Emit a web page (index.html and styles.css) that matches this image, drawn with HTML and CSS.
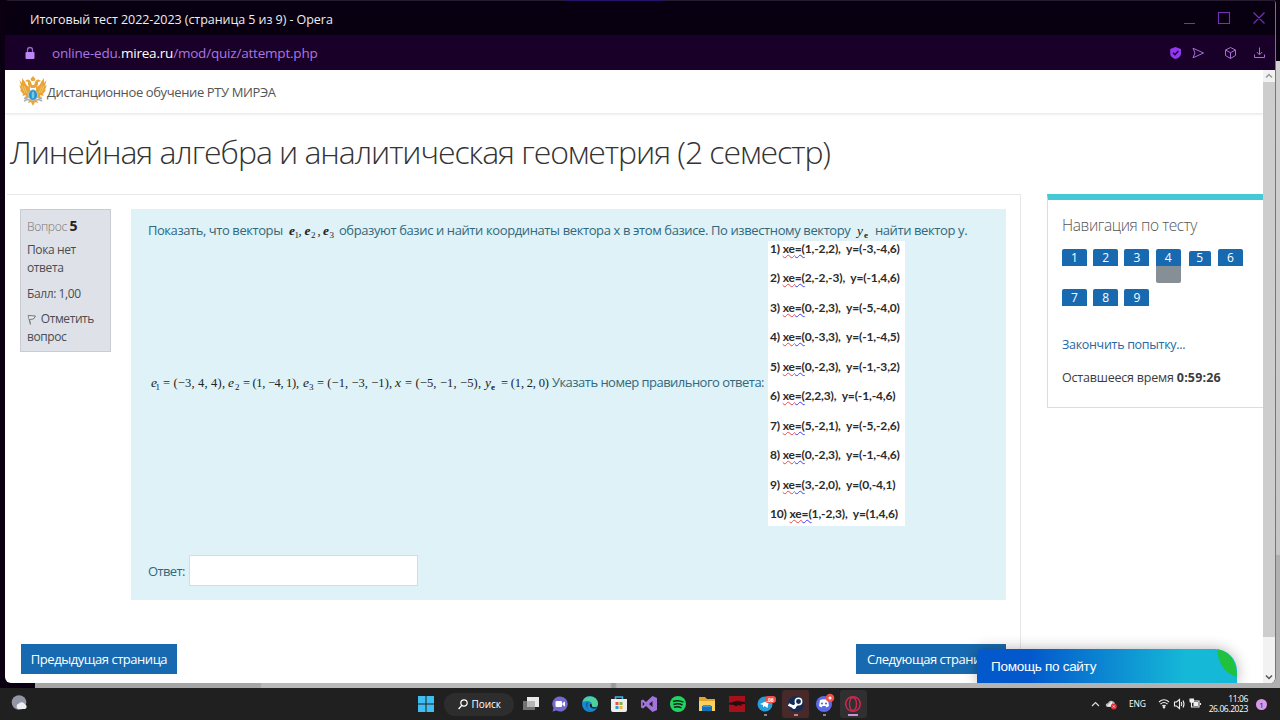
FILE: index.html
```
<!DOCTYPE html>
<html lang="ru">
<head>
<meta charset="utf-8">
<title>Итоговый тест 2022-2023</title>
<link rel="stylesheet" href="styles.css">
</head>
<body>
<div class="desktop">
<div class="window">
  <header class="titlebar">
    <span class="wintitle">Итоговый тест 2022-2023 (страница 5 из 9) - Opera</span>
    <svg class="winctl" width="90" height="20" viewBox="0 0 90 20" fill="none" stroke="#7433b8" stroke-width="1.1"><path d="M5 13.500H16M39.500 2.500H50.500V13.500H39.500ZM74.500 2.500L85.500 13.500M85.500 2.500L74.500 13.500"/></svg>
  </header>
  <div class="urlbar">
    <svg width="12" height="14" viewBox="0 0 12 14"><path d="M3.500 6V4a2.500 2.500 0 0 1 5 0v2" fill="none" stroke="#9a63cf" stroke-width="1.300"/><rect x="1.500" y="6" width="9" height="7" rx="1" fill="#bd86f5"/></svg>
    <span class="url">online-edu.<b>mirea.ru</b>/mod/quiz/attempt.php</span>
    <svg class="urlicons" width="100" height="16" viewBox="0 0 100 16" fill="none" stroke="#a86fd6" stroke-width="1"><path d="M5.500 2L11 4V9Q10.500 12.500 5.500 14Q.7 12.500 .2 9V4Z" fill="#9238f0" stroke="none"/><path d="M3 7.800L5 9.800L8.300 6" stroke="#190028" stroke-width="1.400"/><path d="M23 3.200L33.500 8L23 12.800L25 8Z"/><path d="M60.500 2.500L65.500 5V10.500L60.500 13.500L55.500 10.500V5ZM55.500 5L60.500 7.700L65.500 5M60.500 7.700V13.500"/><path d="M89.500 2.500V9.500M86.800 7L89.500 9.800L92.200 7M84.500 9.500V12.500H94.500V9.500"/></svg>
  </div>
  <div class="view">
    <main class="page">
      <div class="brand">
        <svg width="28" height="32" viewBox="0 0 28 32"><g fill="#e8a63a"><path d="M14 0L16.500 3L15.500 5H12.500L11.500 3Z"/><path d="M12.500 12Q8 10 9 6L6 5Q9 2 11.500 5L13 9H15L16.500 5Q19 2 22 5L19 6Q20 10 15.500 12Z"/><path d="M11 11Q7 10 6 6L3 2L3 7L.5 4L2 10L.3 9L2 14L1 14L4 18L3.500 20L7 19L6 22L11 22ZM17 11Q21 10 22 6L25 2L25 7L27.500 4L26 10L27.700 9L26 14L27 14L24 18L24.500 20L21 19L22 22L17 22Z"/><path d="M11 22L9 27L12 26L14 30L16 26L19 27L17 22Z"/></g><path d="M5 22L10 24M18 24L23 22M5 25L9 23M19 23L23 25" stroke="#a9adb5" stroke-width="1.600"/><path d="M5 10L8 17M23 10L20 17M3 10L6 17M25 10L22 17" stroke="#f7cf7b" stroke-width=".7"/><ellipse cx="14" cy="19" rx="4.500" ry="5.300" fill="#2493cb" stroke="#b7c9cf"/><path d="M13 16H15V22H13ZM12 19H16" fill="#75c9e7" stroke="#75c9e7" stroke-width=".4"/></svg>
        <span>Дистанционное обучение РТУ МИРЭА</span>
      </div>
      <h1 class="course">Линейная алгебра и аналитическая геометрия (2 семестр)</h1>
      <div class="columns">
        <section class="region">
          <div class="question">
            <aside class="info">
              <p class="no"><span>Вопрос</span> <b>5</b></p>
              <p>Пока нет<br>ответа</p>
              <p class="grade">Балл: 1,00</p>
              <p class="flag"><svg width="11" height="11" viewBox="0 0 11 11"><path d="M1.200 1L3.500 10.500" stroke="#777" stroke-width="1.200"/><path d="M1.500 1.500L8.500 2L6.500 5L2.500 5.500" fill="#e8e9ec" stroke="#777"/></svg> Отметить<br>вопрос</p>
            </aside>
            <div class="formulation">
              <div class="prompt">
                <span class="s1">Показать, что векторы</span>
                <svg class="vec" width="50" height="20" viewBox="0 0 50 20"><g class="math bold"><text x="3" y="15">e</text><text x="18.500" y="15">e</text><text x="37" y="15">e</text></g><g class="math sub"><text x="8.500" y="17.500">1</text><text x="25" y="17.500">2</text><text x="43.500" y="17.500">3</text></g><g class="math roman"><text x="12.500" y="15">,</text><text x="31.500" y="15">,</text></g></svg>
                <span class="s2">образуют базис и найти координаты вектора x в этом базисе. По известному вектору</span>
                <svg width="21" height="20" viewBox="0 0 21 20"><text class="math" x="4" y="15">y</text><text class="math sub bold" x="11" y="17.500">e</text></svg>
                <span class="s3">найти вектор y.</span>
              </div>
              <div class="given">
                <svg width="404" height="24" viewBox="0 0 404 24">
                  <g class="math"><text x="3" y="15">e</text><text x="80" y="15">e</text><text x="155" y="15">e</text><text x="247" y="15">x</text><text x="337" y="15">y</text></g>
                  <g class="math sub"><text x="7.500" y="18">1</text><text x="87" y="18">2</text><text x="161" y="18">3</text><text x="343" y="18" class="bold">e</text></g>
                  <g class="math roman"><text x="15" y="15" textLength="62">= (−3, 4, 4),</text><text x="95" y="15" textLength="56">= (1, −4, 1),</text><text x="169" y="15" textLength="75">= (−1, −3, −1),</text><text x="257" y="15" textLength="76">= (−5, −1, −5),</text><text x="353" y="15" textLength="48">= (1, 2, 0)</text></g>
                </svg>
                <span class="s4">Указать номер правильного ответа:</span>
                <ol class="options">
                  <li>1) <u>xe</u><i>=(</i>1,-2,2),&nbsp; y=(-3,-4,6)</li>
                  <li>2) <u>xe</u><i>=(</i>2,-2,-3),&nbsp; y=(-1,4,6)</li>
                  <li>3) <u>xe</u><i>=(</i>0,-2,3),&nbsp; y=(-5,-4,0)</li>
                  <li>4) <u>xe</u><i>=(</i>0,-3,3),&nbsp; y=(-1,-4,5)</li>
                  <li>5) <u>xe</u><i>=(</i>0,-2,3),&nbsp; y=(-1,-3,2)</li>
                  <li>6) <u>xe</u><i>=(</i>2,2,3),&nbsp; y=(-1,-4,6)</li>
                  <li>7) <u>xe</u><i>=(</i>5,-2,1),&nbsp; y=(-5,-2,6)</li>
                  <li>8) <u>xe</u><i>=(</i>0,-2,3),&nbsp; y=(-1,-4,6)</li>
                  <li>9) <u>xe</u><i>=(</i>3,-2,0),&nbsp; y=(0,-4,1)</li>
                  <li>10) <u>xe</u><i>=(</i>1,-2,3),&nbsp; y=(1,4,6)</li>
                </ol>
              </div>
              <label class="answer"><span>Ответ:</span><input type="text"></label>
            </div>
          </div>
          <div class="pager"><button>Предыдущая страница</button><button class="next">Следующая страница</button></div>
        </section>
        <aside class="nav">
          <h2>Навигация по тесту</h2>
          <div class="cells"><a>1</a><a>2</a><a>3</a><a class="done">4</a><a class="here">5</a><a>6</a><a>7</a><a>8</a><a>9</a></div>
          <a class="finish">Закончить попытку...</a>
          <p class="timer">Оставшееся время <b>0:59:26</b></p>
        </aside>
      </div>
    </main>
    <div class="scroll">
      <svg width="12" height="12" viewBox="0 0 12 12"><path d="M3 7.500L6 4.500L9 7.500" fill="none" stroke="#999" stroke-width="1.500"/></svg>
      <div class="thumb"></div>
      <svg class="down" width="12" height="12" viewBox="0 0 12 12"><path d="M3 4.500L6 7.500L9 4.500" fill="none" stroke="#555" stroke-width="1.500"/></svg>
    </div>
    <div class="help"><span>Помощь по сайту</span><svg width="20" height="29" viewBox="0 0 20 29"><path d="M0 0Q19 3 20 28Q2 23 0 0Z" fill="#1fc13d"/></svg></div>
  </div>
</div>
</div>
<footer class="taskbar">
  <svg class="weather" width="20" height="20" viewBox="0 0 20 20"><circle cx="9" cy="8.500" r="7.300" fill="#9296a4"/><path d="M8 15a3 3 0 0 1 1-5.500a3.500 3.500 0 0 1 6 .8a2.500 2.500 0 0 1 0 4.700Z" fill="#eceef2"/></svg>
  <div class="apps">
    <span class="app"><svg width="18" height="18" viewBox="0 0 18 18" fill="#3fbef2"><path d="M1 1H8.500V8.500H1ZM9.500 1H17V8.500H9.500ZM1 9.500H8.500V17H1ZM9.500 9.500H17V17H9.500Z"/></svg></span>
    <span class="search"><svg width="10" height="11" viewBox="0 0 10 11" fill="none" stroke="#fff" stroke-width="1.200"><circle cx="6" cy="4" r="3.200"/><path d="M3.700 6.500L.6 10"/></svg>Поиск</span>
    <span class="app"><svg width="18" height="18" viewBox="0 0 18 18"><path d="M1 6H13V15H1Z" fill="#737373"/><path d="M5 2H17V12H5Z" fill="#e9e9e9"/><path d="M5 6H13V12H5Z" fill="#b5b5b5"/></svg></span>
    <span class="app"><svg width="18" height="18" viewBox="0 0 18 18"><path d="M9 1.500a7.500 7.500 0 1 1-3.500 14L1.500 16.500L2.500 13A7.500 7.500 0 0 1 9 1.500Z" fill="#7469cc"/><rect x="4.500" y="6" width="6.500" height="6" rx="1" fill="#fff"/><path d="M11.500 8L14 6.500V11.500L11.500 10Z" fill="#fff"/></svg></span>
    <span class="app"><svg width="18" height="18" viewBox="0 0 18 18"><circle cx="9" cy="9" r="8" fill="#1689cf"/><path d="M1.500 7A8 8 0 0 1 17 8.500Q17 12 13 12Q10 12 11 10Q11 6.500 7 6Q3.500 6 1.500 7Z" fill="#4ed29a"/><path d="M7.500 7.500Q4 13 10 16.800A8 8 0 0 1 5 7.800Z" fill="#135da6"/><path d="M9 9Q8 12.500 12 13.500Q15 13.800 16 12.800Q15 12 13 12Q10 12 11 10Q10.500 8.500 9 9Z" fill="#202020"/></svg></span>
    <span class="app"><svg width="18" height="18" viewBox="0 0 18 18"><path d="M5.500 5V2H12.500V5" fill="none" stroke="#41b5e5" stroke-width="1.500"/><path d="M1 4H17V15Q17 17 15 17H3Q1 17 1 15Z" fill="#eee"/><path d="M5.500 7H8.500V10H5.500Z" fill="#e95435"/><path d="M9.500 7H12.500V10H9.500Z" fill="#77b743"/><path d="M5.500 11H8.500V14H5.500Z" fill="#269fd8"/><path d="M9.500 11H12.500V14H9.500Z" fill="#f5b52e"/></svg></span>
    <span class="app"><svg width="18" height="18" viewBox="0 0 18 18"><path d="M12.500 1L17 3V15L12.500 17L6 11L3 13.500L1 12.500V5.500L3 4.500L6 7ZM12.500 6L9 9L12.500 12ZM2.700 7V11L4.700 9Z" fill="#a174dc" fill-rule="evenodd"/></svg></span>
    <span class="app"><svg width="18" height="18" viewBox="0 0 18 18"><circle cx="9" cy="9" r="8" fill="#20d660"/><path d="M4 6.500Q9.500 4.700 14.500 7.200M4.500 9.500Q9.500 8 13.500 10M5 12.200Q9 11 12.500 12.800" stroke="#161f19" stroke-width="1.500" fill="none"/></svg></span>
    <span class="app"><svg width="18" height="18" viewBox="0 0 18 18"><path d="M1 2H7L9 4H17V16H1Z" fill="#e3a32d"/><path d="M1 6H17V16H1Z" fill="#ffd15a"/><path d="M4 11H14V16H4Z" fill="#1670b8"/><path d="M5 10H13V12H5Z" fill="#3795dc"/></svg></span>
    <span class="app"><svg width="18" height="18" viewBox="0 0 18 18"><path d="M1 1H17V17H1Z" fill="#a90f1a"/><path d="M1 8L5 7L9 5.500L13 6.500L17 7V9L13 9.500L14 11L10 10L8 11.500L6 10L1 9.500Z" fill="#270d10"/></svg></span>
    <span class="app"><svg width="20" height="24" viewBox="0 0 20 24"><circle cx="9" cy="12" r="7.500" fill="#279ed8"/><path d="M4 12L13 8L11.500 16L8.500 14L7 15.500V13Z" fill="#fff"/><rect x="9" y="4" width="11" height="7" rx="3" fill="#ef5047"/><text class="badge" x="10.500" y="9.500">.06</text><path d="M8 23H11" stroke="#aaa" stroke-width="1.500"/></svg></span>
    <span class="app hot"><svg width="20" height="24" viewBox="0 0 20 24"><circle cx="10" cy="12" r="8" fill="#142c55"/><path d="M2.500 12.500L8 15L12 11" stroke="#fff" stroke-width="3" fill="none"/><circle cx="12.500" cy="9.500" r="3.200" fill="#142c55" stroke="#fff" stroke-width="1.500"/><circle cx="8" cy="15" r="2" fill="#fff"/><path d="M8 23H12" stroke="#f79aa5" stroke-width="1.500"/></svg></span>
    <span class="app"><svg width="20" height="24" viewBox="0 0 20 24"><circle cx="9" cy="12" r="8" fill="#5c6bea"/><path d="M5 8Q9 6.500 13 8L14 14L11.500 15.500L10.500 14H7.500L6.500 15.500L4 14Z" fill="#fff"/><circle cx="7" cy="11.500" r="1.100" fill="#5c6bea"/><circle cx="11" cy="11.500" r="1.100" fill="#5c6bea"/><circle cx="15" cy="6" r="4.300" fill="#ef5148"/><circle cx="15" cy="6" r="1.500" fill="#fff"/><path d="M8 23H11" stroke="#aaa" stroke-width="1.500"/></svg></span>
    <span class="app active"><svg width="20" height="24" viewBox="0 0 20 24"><g fill="none" stroke="#cf2850"><circle cx="10" cy="12" r="7.300" stroke-width="1.500"/><ellipse cx="10" cy="12" rx="3.500" ry="6.500" stroke-width="1.300"/></g><path d="M5 23H15" stroke="#d7a2e8" stroke-width="1.800"/></svg></span>
  </div>
  <div class="tray">
    <svg width="28" height="20" viewBox="0 0 28 20"><path d="M3 12L6.500 8.500L10 12" fill="none" stroke="#ddd" stroke-width="1.200"/><path d="M18 13Q15 10 19 9Q21 5 25 8Q27 10 25 13Z" fill="#b9b9b9"/><path d="M18 12L23 7V13Z" fill="#eee"/><circle cx="24.800" cy="12.500" r="3" fill="#dc323b"/><path d="M23.800 11.500L25.800 13.500M25.800 11.500L23.800 13.500" stroke="#fff" stroke-width=".7"/></svg>
    <span class="lang">ENG</span>
    <svg class="status" width="44" height="16" viewBox="0 0 44 16" fill="none" stroke="#eee" stroke-width="1.100"><path d="M1 6Q6 1.500 11 6M2.500 8Q6 5 9.500 8M4.300 10Q6 8.500 7.700 10"/><circle cx="6" cy="11.300" r=".7" fill="#eee"/><path d="M16.500 6H18.500L21.500 3.500V12.500L18.500 10H16.500ZM23.200 6Q24.500 8 23.200 10M25 4.500Q27 8 25 11.500"/><path d="M33.500 5H41V11H33.500ZM42.500 7V9"/><path d="M36 6.500H39.500V9.500H36ZM32 3H35.500V5.500Q34 7.500 32 5.500Z" fill="#eee"/></svg>
    <span class="clock">11:06<br>26.06.2023</span>
    <span class="count">1</span>
  </div>
</footer>
</body>
</html>
```

FILE: styles.css
```
* { box-sizing: border-box; }
body { margin: 0; width: 1280px; height: 720px; overflow: hidden; font: 13px/18px "Open Sans", "Noto Sans", sans-serif; color: #3a3d40; background: #202020; }
p, h1, h2, ol { margin: 0; padding: 0; }
svg { display: block; flex: none; }
.desktop { height: 688px; padding: 0 4px 5px 5px; background: linear-gradient(#0a0012, #0a0012) 0 0/35px 100% no-repeat, linear-gradient(#0a0012, #0a0012) 0 0/100% 61px no-repeat, linear-gradient(#d2d2d2, #c6c6c6) 100% 0/4px 555px no-repeat, linear-gradient(90deg, #a5a5a5 260px, #b9b9b9 262px, #b9b9b9 610px, #999 612px, #999 615px, #b9b9b9 617px, #b0b0b0); }
.window { height: 683px; border-right: 1px solid #777; border-radius: 4px 4px 6px 6px; overflow: hidden; display: flex; flex-direction: column; }
.titlebar { height: 35px; display: flex; align-items: center; justify-content: space-between; padding: 5px 6px 0 25px; flex: none; background: linear-gradient(#2a1168, #2a1168) 560px 0/98px 1px no-repeat, linear-gradient(#261b30, #261b30) 0 0/100% 1px no-repeat, #080010; }
.wintitle { color: #eee; font-size: 12.500px; letter-spacing: -.06px; white-space: nowrap; }
.urlbar { height: 35px; flex: none; background: #190028; display: flex; align-items: center; padding: 1px 5px 0 19px; color: #ac75e4; }
.url { margin-left: 16px; font-size: 13.5px; letter-spacing: -.2px; white-space: nowrap; }
.url b { font-weight: 400; color: #fff; }
.urlicons { margin-left: auto; }
.view { position: relative; height: 613px; display: flex; background: #fff; }
.page { width: 1258px; height: 613px; overflow: hidden; flex: none; }
.brand { height: 44px; display: flex; align-items: center; padding-left: 14px; border-bottom: 1px solid #ececec; box-shadow: 0 1px 2px #eee; color: #555; letter-spacing: -.38px; white-space: nowrap; }
.course { height: 80px; padding: 18px 0 0 5px; font-size: 32px; line-height: 40px; letter-spacing: -1.070px; font-weight: 300; white-space: nowrap; color: #333; }
.columns { display: flex; gap: 26px; }
.region { width: 1014px; margin-left: 2px; height: 500px; border: solid #e8e8e8; border-width: 1px 1px 0 0; padding: 14px 14px 0 13px; }
.question { display: flex; gap: 20px; height: 391px; }
.info { width: 91px; height: 143px; background: #dee2e8; border: 1px solid #c9cdd3; padding: 7px 0 0 6px; font-size: 12px; letter-spacing: -.4px; color: #494c50; white-space: nowrap; }
.no { margin-bottom: 5px; line-height: 18px; }
.no span { color: #777; font-weight: 300; letter-spacing: -.3px; }
.no b { font-size: 14px; color: #222; }
.grade { margin: 8px 0 7px; }
.flag svg { display: inline-block; vertical-align: -2px; }
.formulation { width: 876px; background: #def2f8; color: #32687c; padding: 11px 0 0 17px; letter-spacing: -.39px; }
.prompt { display: flex; height: 20px; align-items: center; white-space: nowrap; }
.vec { margin-right: 3px; }
.s1 { width: 138px; letter-spacing: -.43px; }
.s2 { width: 514px; }
.s3 { margin-left: 1px; }
.given { display: flex; height: 286px; align-items: center; }
.given svg { margin-top: 2px; }
.s4 { width: 216px; padding-bottom: 2px; letter-spacing: -.52px; white-space: nowrap; }
.math { font: italic 13.5px "Liberation Serif", serif; fill: #222; letter-spacing: 0; }
.roman, .roman text { font-style: normal; font-size: 12.5px; }
.sub, .sub text { font-style: normal; font-size: 9px; }
.bold { font-weight: 700; }
.options { list-style: none; width: 137px; height: 285px; background: #fff; color: #2b2b2b; font: 700 12px/16px Lato, sans-serif; letter-spacing: -.14px; padding: 0 0 0 2px; white-space: nowrap; }
.options li { height: 29.500px; }
.options u, .options i { font-style: normal; text-decoration: underline wavy #ed4747 .7px; text-underline-offset: 1px; text-decoration-skip-ink: none; }
.options i { text-decoration-color: #3c3cf0; }
.answer { display: flex; align-items: center; padding-top: 29px; }
.answer span { width: 41px; letter-spacing: -.6px; white-space: nowrap; }
.answer input { width: 229px; height: 31px; border: 1px solid #d3dde1; background: #fff; padding: 0; }
.pager { display: flex; justify-content: space-between; padding: 44px 0 0 1px; }
.pager button { font: 13px "Open Sans", sans-serif; letter-spacing: -.46px; width: 156px; height: 30px; border: 0; padding: 0; background: #186ab0; color: #fff; white-space: nowrap; }
.pager .next { width: 150px; overflow: hidden; text-align: left; padding-left: 11px; }
.nav { width: 217px; height: 214px; border: solid #ddd; border-width: 0 0 1px 1px; border-top: 6px solid #45c9d6; padding: 15px 0 0 14px; }
.nav h2 { font-size: 15.500px; line-height: 21px; letter-spacing: -.4px; font-weight: 300; color: #555; white-space: nowrap; }
.cells { display: grid; grid-template-columns: repeat(6, 25px); column-gap: 6.200px; grid-auto-rows: 40px; margin-top: 13px; }
.cells a { height: 17px; background: #186ab0; color: #fff; border-radius: 2px 2px 0 0; text-align: center; font-size: 12px; line-height: 17px; }
.cells .done { height: 34px; border-radius: 2px; background: linear-gradient(#186ab0 17px, #868e96 17px); }
.cells .here { height: 15px; line-height: 14px; margin: 2px 1px 0 2px; }
.finish { display: block; margin-top: 7px; color: #2469a5; font-size: 12.500px; letter-spacing: -.3px; white-space: nowrap; }
.timer { margin-top: 15px; font-size: 12.500px; letter-spacing: -.2px; white-space: nowrap; }
.timer b { letter-spacing: .15px; }
.scroll { width: 12px; background: #f2f2f2; display: flex; flex-direction: column; flex: none; }
.thumb { height: 555px; background: #cdcdcd; }
.down { margin-top: auto; }
.help { position: absolute; left: 972px; top: 579px; width: 260px; height: 34px; display: flex; justify-content: space-between; padding-left: 14px; border-radius: 5px 22px 0 0; overflow: hidden; background: linear-gradient(90deg, #0358cc 20%, #15b8d7 80%); color: #fff; font: 13.500px/35px "Liberation Sans", sans-serif; letter-spacing: -.28px; box-shadow: 0 0 14px rgba(0,0,0,.3); white-space: nowrap; }
.taskbar { height: 32px; background: #202020; display: flex; align-items: center; color: #fff; }
.weather { margin-left: 10px; }
.apps { display: flex; align-items: center; margin-left: 381px; }
.app { width: 29.400px; height: 28px; display: flex; align-items: center; justify-content: center; }
.search { width: 70px; height: 23px; margin: 0 2px 0 4px; border-radius: 12px; background: #2d2d2d; display: flex; align-items: center; gap: 3px; padding-left: 14px; font-size: 10px; }
.hot { background: #482929; border-radius: 3px; width: 27px; margin: 0 1.200px; }
.active { background: #303030; border-radius: 3px; width: 27px; }
.badge { font: 700 5px "Open Sans", sans-serif; fill: #fff; }
.tray { margin-left: auto; padding-right: 13px; display: flex; align-items: center; }
.tray > :first-child { margin-right: 12px; }
.lang { width: 20px; font-size: 8.500px; letter-spacing: -.2px; }
.status { margin-left: 9px; }
.clock { width: 45px; text-align: right; font-size: 8.500px; letter-spacing: -.4px; line-height: 10.500px; margin: 0 8px 0 1px; white-space: nowrap; }
.count { width: 11px; height: 11px; border-radius: 50%; background: #d69be8; color: #222; font-size: 8px; line-height: 11px; text-align: center; }
```
